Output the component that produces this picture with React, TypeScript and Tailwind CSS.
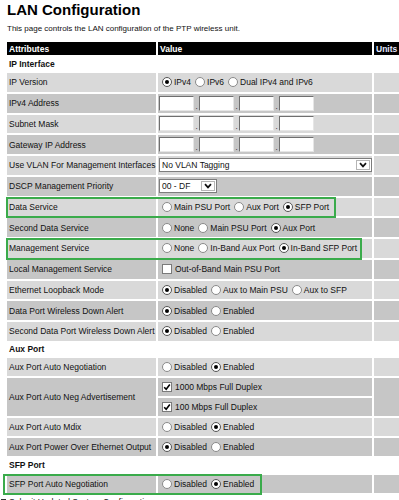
import type { ReactNode } from 'react';

const FONT = "font-['Liberation_Sans',Arial,sans-serif]";

function Radio({ on, label }: { on?: boolean; label: string }) {
  return (
    <span className="flex items-center gap-[2px] mr-[4px]">
      <span
        className={`flex items-center justify-center w-[10px] h-[10px] rounded-full bg-white border ${
          on ? 'border-[#555]' : 'border-[#8a8a8a]'
        }`}
      >
        {on && <span className="block w-[4px] h-[4px] rounded-full bg-black" />}
      </span>
      <span>{label}</span>
    </span>
  );
}

function Check({ on, label }: { on?: boolean; label: string }) {
  return (
    <span className="flex items-center gap-[3px]">
      <span className="flex items-center justify-center w-[10px] h-[10px] bg-white border border-[#7a7a7a]">
        {on && (
          <svg width="8" height="8" viewBox="0 0 8 8">
            <path d="M1.2 4.2 L3.2 6.2 L6.8 1.6" fill="none" stroke="#000" strokeWidth="1.6" />
          </svg>
        )}
      </span>
      <span>{label}</span>
    </span>
  );
}

function IpBoxes() {
  return (
    <span className="flex items-end -ml-[3px]">
      {[0, 1, 2, 3].map((i) => (
        <span key={i} className="flex items-end">
          <span className="block w-[35px] h-[15px] bg-white border border-t-[#6f6f6f] border-l-[#6f6f6f] border-b-[#e6e6e6] border-r-[#e6e6e6]" />
          {i < 3 && <span className="w-[5px] text-center leading-[8px] text-[8px]">.</span>}
        </span>
      ))}
    </span>
  );
}

function Select({ text, width }: { text: string; width: string }) {
  return (
    <span className={`flex items-center justify-between h-[14px] -ml-[3px] bg-white border border-[#7d7d7d] pl-[2px] pr-[1px] ${width}`}>
      <span>{text}</span>
      <span className="flex items-center justify-center w-[14px] h-[10px] border border-[#b5b5b5] bg-white">
        <svg width="8" height="6" viewBox="0 0 8 6">
          <path d="M1 1.2 L4 4.4 L7 1.2" fill="none" stroke="#111" strokeWidth="1.7" />
        </svg>
      </span>
    </span>
  );
}

type Row = {
  attr: string;
  value: ReactNode;
  dark?: boolean;
  box?: string;
};

const ipRows: Row[] = [
  {
    attr: 'IP Version',
    value: (
      <>
        <Radio on label="IPv4" />
        <Radio label="IPv6" />
        <Radio label="Dual IPv4 and IPv6" />
      </>
    ),
  },
  { attr: 'IPv4 Address', value: <IpBoxes />, dark: true },
  { attr: 'Subnet Mask', value: <IpBoxes /> },
  { attr: 'Gateway IP Address', value: <IpBoxes />, dark: true },
  { attr: 'Use VLAN For Management Interfaces', value: <Select text="No VLAN Tagging" width="w-[213px]" /> },
  { attr: 'DSCP Management Priority', value: <Select text="00 - DF" width="w-[58px]" />, dark: true },
  {
    attr: 'Data Service',
    value: (
      <>
        <Radio label="Main PSU Port" />
        <Radio label="Aux Port" />
        <Radio on label="SFP Port" />
      </>
    ),
    box: 'left-[-1px] w-[330px]',
  },
  {
    attr: 'Second Data Service',
    value: (
      <>
        <Radio label="None" />
        <Radio label="Main PSU Port" />
        <Radio on label="Aux Port" />
      </>
    ),
    dark: true,
  },
  {
    attr: 'Management Service',
    value: (
      <>
        <Radio label="None" />
        <Radio label="In-Band Aux Port" />
        <Radio on label="In-Band SFP Port" />
      </>
    ),
    box: 'left-[-1px] w-[356px]',
  },
  { attr: 'Local Management Service', value: <Check label="Out-of-Band Main PSU Port" />, dark: true },
  {
    attr: 'Ethernet Loopback Mode',
    value: (
      <>
        <Radio on label="Disabled" />
        <Radio label="Aux to Main PSU" />
        <Radio label="Aux to SFP" />
      </>
    ),
  },
  {
    attr: 'Data Port Wireless Down Alert',
    value: (
      <>
        <Radio on label="Disabled" />
        <Radio label="Enabled" />
      </>
    ),
    dark: true,
  },
  {
    attr: 'Second Data Port Wireless Down Alert',
    value: (
      <>
        <Radio on label="Disabled" />
        <Radio label="Enabled" />
      </>
    ),
  },
];

function DataRow({ row, h }: { row: Row; h: string }) {
  const bg = row.dark ? 'bg-[#c6c6c6]' : 'bg-[#d9d9d9]';
  return (
    <>
      <div className={`relative flex items-center pl-[2px] whitespace-nowrap ${h} ${bg}`}>
        {row.attr}
        {row.box && (
          <div
            className={`absolute top-[-1px] h-[calc(100%+3px)] border-2 border-[#3aab4b] z-10 pointer-events-none ${row.box}`}
          />
        )}
      </div>
      <div className={`flex items-center pl-[4px] whitespace-nowrap ${h} ${bg}`}>{row.value}</div>
      <div className={`${h} ${bg}`} />
    </>
  );
}

export default function App() {
  const topH = 'h-[18.75px]';
  const auxH = 'h-[18px]';
  return (
    <div className={`w-[399px] h-[500px] overflow-hidden bg-white text-[#111] ${FONT}`}>
      <h1 className="pl-[7px] pt-[1px] h-[18px] text-[15px] leading-[17px] font-bold text-black">
        LAN Configuration
      </h1>
      <p className="pl-[7px] mt-[6px] text-[8px] leading-[10px]">
        This page controls the LAN configuration of the PTP wireless unit.
      </p>
      <div className="ml-[7px] mt-[8px] w-[440px] grid grid-cols-[149px_214px_60px] gap-[2px] text-[8.5px] leading-[10px]">
        <div className="h-[13px] bg-black text-white font-bold pl-[2px] flex items-center">Attributes</div>
        <div className="h-[13px] bg-black text-white font-bold pl-[2px] flex items-center">Value</div>
        <div className="h-[13px] bg-black text-[#e4e8ff] font-bold pl-[2px] flex items-center">Units</div>

        <div className="col-span-3 h-[14px] flex items-center pl-[2px] font-bold">IP Interface</div>
        {ipRows.map((r) => (
          <DataRow key={r.attr} row={r} h={topH} />
        ))}

        <div className="col-span-3 h-[13px] flex items-center pl-[2px] font-bold">Aux Port</div>
        <DataRow
          h={auxH}
          row={{
            attr: 'Aux Port Auto Negotiation',
            value: (
              <>
                <Radio label="Disabled" />
                <Radio on label="Enabled" />
              </>
            ),
          }}
        />
        <div className="row-span-2 flex items-center pl-[2px] bg-[#c6c6c6]">Aux Port Auto Neg Advertisement</div>
        <div className={`flex items-center pl-[4px] ${auxH} bg-[#c6c6c6]`}>
          <Check on label="1000 Mbps Full Duplex" />
        </div>
        <div className="row-span-2 bg-[#c6c6c6]" />
        <div className={`flex items-center pl-[4px] ${auxH} bg-[#c6c6c6]`}>
          <Check on label="100 Mbps Full Duplex" />
        </div>
        <DataRow
          h={auxH}
          row={{
            attr: 'Aux Port Auto Mdix',
            value: (
              <>
                <Radio label="Disabled" />
                <Radio on label="Enabled" />
              </>
            ),
          }}
        />
        <DataRow
          h={auxH}
          row={{
            attr: 'Aux Port Power Over Ethernet Output',
            value: (
              <>
                <Radio on label="Disabled" />
                <Radio label="Enabled" />
              </>
            ),
            dark: true,
          }}
        />

        <div className="col-span-3 h-[15px] flex items-center pl-[2px] font-bold">SFP Port</div>
        <DataRow
          h={auxH}
          row={{
            attr: 'SFP Port Auto Negotiation',
            value: (
              <>
                <Radio label="Disabled" />
                <Radio on label="Enabled" />
              </>
            ),
            dark: true,
            box: 'left-[-4px] w-[259px]',
          }}
        />
      </div>
      <div className="flex items-center gap-[3px] pl-[1px] mt-[4px] text-[8.5px] leading-[10px]">
        <span className="block w-[5px] h-[5px] bg-[#333]" />
        <span>Submit Updated System Configuration</span>
      </div>
    </div>
  );
}
